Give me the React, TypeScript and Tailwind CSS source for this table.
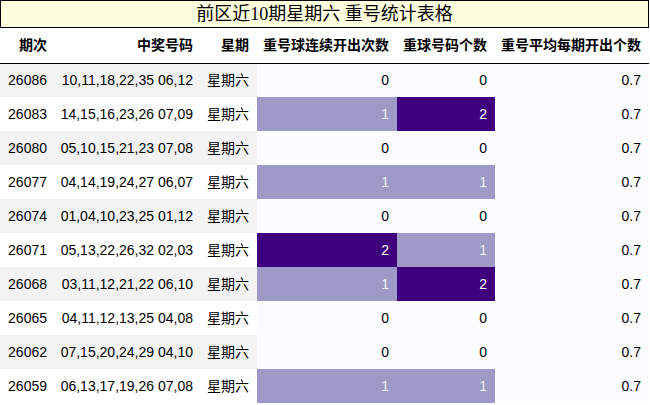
import React from "react";

const rows: [string, string, number, number][] = [
  ["26086", "10,11,18,22,35 06,12", 0, 0],
  ["26083", "14,15,16,23,26 07,09", 1, 2],
  ["26080", "05,10,15,21,23 07,08", 0, 0],
  ["26077", "04,14,19,24,27 06,07", 1, 1],
  ["26074", "01,04,10,23,25 01,12", 0, 0],
  ["26071", "05,13,22,26,32 02,03", 2, 1],
  ["26068", "03,11,12,21,22 06,10", 1, 2],
  ["26065", "04,11,12,13,25 04,08", 0, 0],
  ["26062", "07,15,20,24,29 04,10", 0, 0],
  ["26059", "06,13,17,19,26 07,08", 1, 1],
];

function cellCls(v: number) {
  if (v === 2) return "bg-[#3f007d] text-white";
  if (v === 1) return "bg-[#9e9ac8] text-[#f1f1f1]";
  return "bg-[#fcfbfd] text-black";
}

export default function App() {
  return (
    <div className="w-[650px] h-[405px] bg-white overflow-hidden" style={{ fontFamily: '"Liberation Sans", "Noto Sans CJK SC", sans-serif' }}>
      <div className="w-[649px]">
        <div
          className="h-[28px] border border-black bg-[#ffffe0] flex items-center justify-center text-[18px] text-black"
          style={{ fontFamily: '"Liberation Serif", "Noto Sans CJK SC", serif' }}
        >
          前区近10期星期六 重号统计表格
        </div>
        <table className="table-fixed border-collapse w-[649px] text-[14px] text-black">
          <colgroup>
            <col className="w-[55px]" />
            <col className="w-[146px]" />
            <col className="w-[56px]" />
            <col className="w-[140px]" />
            <col className="w-[98px]" />
            <col className="w-[154px]" />
          </colgroup>
          <thead>
            <tr className="h-[35px] border-b border-black">
              <th className="text-right pr-2 font-bold">期次</th>
              <th className="text-right pr-2 font-bold">中奖号码</th>
              <th className="text-right pr-2 font-bold">星期</th>
              <th className="text-right pr-2 font-bold whitespace-nowrap">重号球连续开出次数</th>
              <th className="text-right pr-2 font-bold whitespace-nowrap">重球号码个数</th>
              <th className="text-right pr-2 font-bold whitespace-nowrap">重号平均每期开出个数</th>
            </tr>
          </thead>
          <tbody>
            {rows.map((r, i) => {
              const rowBg = i % 2 === 0 ? "bg-[#f3f3f3]" : "bg-white";
              return (
                <tr key={r[0]} className="h-[34px]">
                  <td className={`text-right pr-2 ${rowBg}`}>{r[0]}</td>
                  <td className={`text-right pr-2 whitespace-nowrap ${rowBg}`}>{r[1]}</td>
                  <td className={`text-right pr-2 ${rowBg}`}>星期六</td>
                  <td className={`text-right pr-2 ${cellCls(r[2])}`}>{r[2]}</td>
                  <td className={`text-right pr-2 ${cellCls(r[3])}`}>{r[3]}</td>
                  <td className="text-right pr-2 bg-[#fcfbfd]">0.7</td>
                </tr>
              );
            })}
          </tbody>
        </table>
      </div>
    </div>
  );
}
